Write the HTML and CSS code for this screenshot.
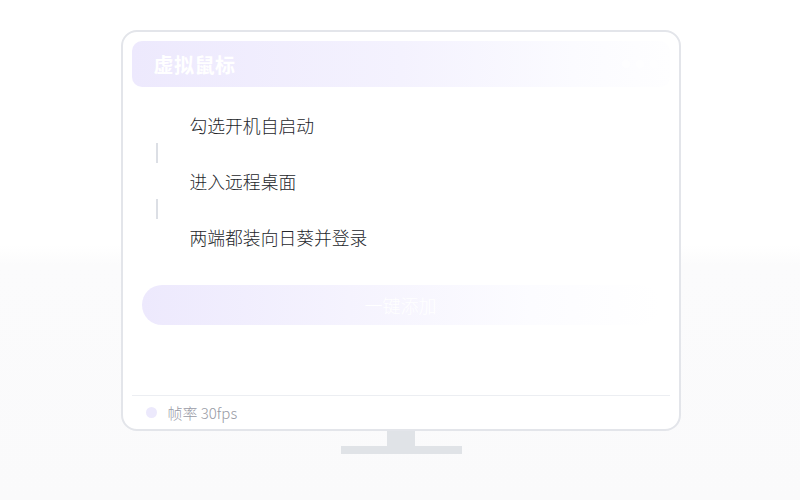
FILE: index.html
```html
<!DOCTYPE html>
<html lang="zh-CN">
<head>
    <meta charset="UTF-8">
    <meta name="viewport" content="width=device-width, initial-scale=1.0">
    <title>虚拟鼠标</title>
    <link rel="stylesheet" href="styles.css">
</head>
<body>
    <div class="stage">
        <!-- monitor screen -->
        <div class="monitor">
            <div class="screen-body">
                <div class="panel-header">
                    <span class="panel-title">虚拟鼠标</span>
                    <span class="header-dots">
                        <i></i><i></i><i></i>
                    </span>
                </div>

                <ol class="steps">
                    <li class="step">勾选开机自启动</li>
                    <li class="step-line"></li>
                    <li class="step">进入远程桌面</li>
                    <li class="step-line"></li>
                    <li class="step">两端都装向日葵并登录</li>
                </ol>

                <button class="add-button">一键添加</button>
            </div>

            <div class="status-bar">
                <span class="status-dot"></span>
                <span class="status-text">帧率 30fps</span>
            </div>
        </div>

        <!-- stand -->
        <div class="stand-neck"></div>
        <div class="stand-base"></div>
    </div>
</body>
</html>
```

FILE: styles.css
```css
:root {
    --frame-color: #e3e5ea;
    --stand-color: #e0e3e7;
    --lavender: #ede9fd;
    --text-color: #24262b;
    --muted-text: #989aa5;
    --font-stack: "Noto Sans CJK SC", "Noto Sans", sans-serif;
}

html,
body {
    margin: 0;
    height: 100%;
}

body {
    font-family: var(--font-stack);
    background: linear-gradient(180deg, #fff 0, #fff 49%, #fbfbfc 53%, #fafafb 100%);
}

.stage {
    display: flex;
    flex-direction: column;
    align-items: center;
    padding-top: 30px;
}

.monitor {
    width: 560px;
    height: 401px;
    box-sizing: border-box;
    margin-left: 1px;
    padding: 9px 9px 0;
    display: flex;
    flex-direction: column;
    background: #fff;
    border: 2px solid var(--frame-color);
    border-radius: 16px;
}

.screen-body {
    flex: 1;
}

.panel-header {
    height: 46px;
    display: flex;
    align-items: center;
    justify-content: space-between;
    padding: 0 12px 0 22px;
    border-radius: 10px;
    background: linear-gradient(90deg, var(--lavender) 0%, #f4f2fe 50%, #fbfbff 82%, #fefeff 100%);
}

.panel-title {
    color: #fff;
    font-size: 20px;
    font-weight: 700;
    letter-spacing: 0.5px;
}

.header-dots {
    display: flex;
    gap: 6px;
    opacity: 0.7;
}

.header-dots i {
    width: 8px;
    height: 8px;
    border-radius: 50%;
    background: #fff;
}

.steps {
    list-style: none;
    margin: 20px 0 0;
    padding: 0;
}

.step {
    height: 36px;
    line-height: 36px;
    padding-left: 58px;
    color: var(--text-color);
    font-size: 17.8px;
    font-weight: 300;
}

.step-line {
    height: 20px;
    width: 2px;
    margin-left: 24px;
    background: #dcdfe5;
}

.add-button {
    display: block;
    width: 518px;
    height: 40px;
    margin: 30px 0 0 10px;
    border: none;
    border-radius: 20px;
    color: #fff;
    font-family: var(--font-stack);
    font-size: 18px;
    font-weight: 300;
    background: linear-gradient(90deg, var(--lavender) 0%, #f5f3fe 40%, #fcfcff 75%, #fff 100%);
}

.status-bar {
    height: 33px;
    display: flex;
    align-items: center;
    gap: 11px;
    padding-left: 14px;
    border-top: 1px solid #eceef2;
}

.status-dot {
    width: 11px;
    height: 11px;
    border-radius: 50%;
    background: #ece9fc;
}

.status-text {
    color: var(--muted-text);
    font-size: 15px;
    font-weight: 300;
}

.stand-neck {
    width: 28px;
    height: 15px;
    margin-left: 2px;
    background: var(--stand-color);
}

.stand-base {
    width: 121px;
    height: 8px;
    margin-left: 2px;
    background: var(--stand-color);
}
```
